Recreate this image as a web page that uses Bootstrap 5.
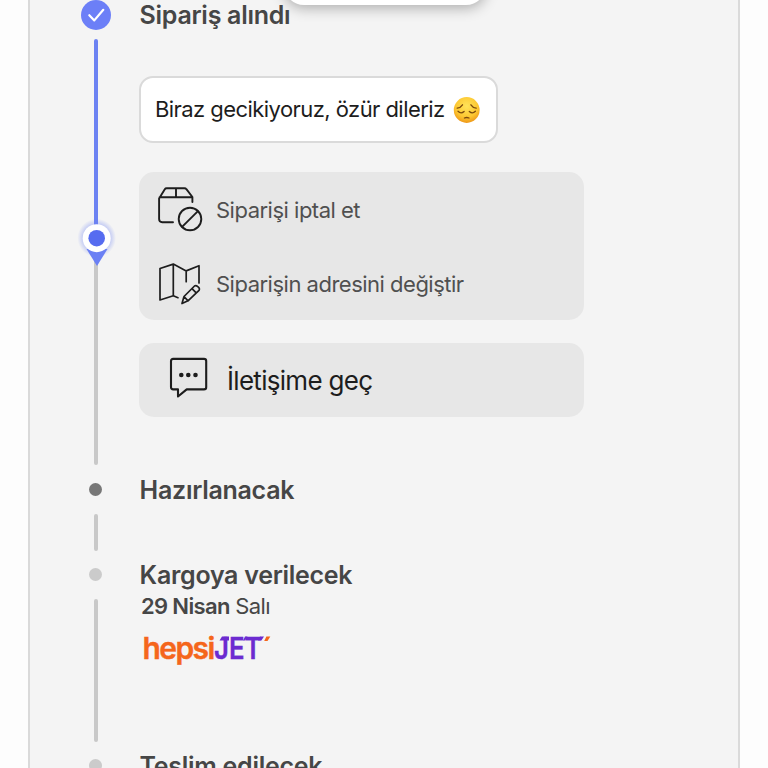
<!DOCTYPE html>
<html lang="tr">
<head>
    <meta charset="UTF-8">
    <meta name="viewport" content="width=device-width, initial-scale=1.0">
    <title>Sipariş Takibi</title>
    <link href="https://cdn.jsdelivr.net/npm/bootstrap@5.3.0/dist/css/bootstrap.min.css" rel="stylesheet">
    <style>
        body {
            height: 768px;
            overflow: hidden;
            background: #fdfdfd;
            font-family: Inter, "Liberation Sans", sans-serif;
            color: #464646;
        }
        .order-panel {
            width: 712px;
            height: 768px;
            margin-left: 28px;
            padding-left: 51px;
            background: #f4f4f4;
            border: solid #dadada;
            border-width: 0 2px;
            overflow: hidden;
        }
        .floating-bar {
            left: 284px;
            top: -40px;
            width: 202px;
            height: 45px;
            background: #fff;
            border-radius: 20px;
            box-shadow: 0 3px 14px rgba(0, 0, 0, .3);
        }
        .step {
            gap: 28px;
        }
        .step-received { height: 474px; }
        .step-prepare { height: 85px; }
        .step-cargo { height: 191px; }
        .rail {
            width: 30px;
            flex: none;
        }
        .rail-line {
            width: 4px;
            border-radius: 2px;
            background: #c8c8c8;
        }
        .rail-line.done {
            background: #6c82f2;
            height: 199px;
            margin-top: 9px;
            border-radius: 2px 2px 0 0;
        }
        .rail-line.waiting {
            height: 227px;
            border-radius: 0 0 2px 2px;
        }
        .rail-pin {
            left: -5px;
            top: 218px;
        }
        .rail-dot {
            width: 13px;
            height: 13px;
            margin: 9px 1px 18px 0;
            border-radius: 50%;
            background: #cbcbcb;
        }
        .rail-dot.next { background: #777; }
        .step-title {
            height: 30px;
            margin: 0;
            padding-left: .6px;
            font-size: 25px;
            line-height: 30px;
            font-weight: 600;
            letter-spacing: -.28px;
            white-space: nowrap;
        }
        .step-title.upcoming { padding-top: 1px; }
        .delay-note {
            width: 359px;
            height: 67px;
            margin-top: 46px;
            padding-left: 14px;
            background: #fff;
            border: 2px solid #dadada;
            border-radius: 14px;
            color: #1d1d1d;
            font-size: 22px;
            letter-spacing: -.56px;
            white-space: nowrap;
        }
        .action-box {
            width: 445px;
            background: #e7e7e7;
            border-radius: 15px;
        }
        .action-list {
            height: 148px;
            margin-top: 29px;
        }
        .action-row {
            height: 74px;
            padding-left: 17px;
            color: #505050;
            font-size: 22px;
            letter-spacing: -.5px;
        }
        .action-row span { padding-top: 2px; }
        .action-row svg { margin-right: 12px; }
        .contact-box {
            height: 74px;
            margin-top: 23px;
            padding-left: 29px;
            color: #1d1d1d;
            font-size: 26px;
            letter-spacing: -.7px;
        }
        .contact-box svg {
            margin: -4px 17px 0 0;
        }
        .cargo-date {
            height: 30px;
            padding: 2px 0 0 2px;
            font-size: 22px;
            line-height: 30px;
            letter-spacing: -.65px;
        }
        .line-icon {
            fill: none;
            stroke: #1d1d1d;
            stroke-linecap: round;
            stroke-linejoin: round;
            flex: none;
        }
    </style>
</head>
<body>
    <main class="order-panel">
        <!-- Sipariş alındı -->
        <section class="step step-received d-flex">
            <div class="rail position-relative d-flex flex-column align-items-center">
                <svg width="30" height="30" viewBox="0 0 30 30">
                    <circle cx="15" cy="15" r="15" fill="#6c7ff7"/>
                    <path d="M8.3 15.2 13.3 20.4 22.3 9.8" fill="none" stroke="#fff" stroke-width="2.2" stroke-linecap="round" stroke-linejoin="round"/>
                </svg>
                <div class="rail-line done"></div>
                <div class="rail-line waiting"></div>
                <svg class="rail-pin position-absolute" width="40" height="52" viewBox="0 0 40 52">
                    <defs>
                        <radialGradient id="pinGlow">
                            <stop offset=".65" stop-color="#6c82f2" stop-opacity=".42"/>
                            <stop offset="1" stop-color="#6c82f2" stop-opacity="0"/>
                        </radialGradient>
                    </defs>
                    <circle cx="20.7" cy="20" r="19.3" fill="url(#pinGlow)"/>
                    <path d="M10.5 31H31.5L21 48Z" fill="#6b80f4"/>
                    <circle cx="20.7" cy="20.2" r="14" fill="#fff"/>
                    <circle cx="20.7" cy="20.2" r="8.3" fill="#566cf0"/>
                </svg>
            </div>
            <div>
                <h2 class="step-title">Sipariş alındı</h2>
                <div class="delay-note d-flex align-items-center">
                    <span>Biraz gecikiyoruz, özür dileriz</span>
                    <svg class="ms-2" width="27" height="26" viewBox="-.7 0 27 26">
                        <defs>
                            <radialGradient id="faceFill" cx=".5" cy=".35" r=".65">
                                <stop offset="0" stop-color="#ffe35a"/>
                                <stop offset=".65" stop-color="#fdc832"/>
                                <stop offset="1" stop-color="#ee9718"/>
                            </radialGradient>
                        </defs>
                        <circle cx="13" cy="13" r="12.9" fill="url(#faceFill)"/>
                        <g fill="none" stroke="#7c4a0c" stroke-width="1.3" stroke-linecap="round">
                            <path d="M3.5 11.2Q7 10.6 8.8 7.8M22.5 11.2Q19 10.6 17.2 7.8"/>
                            <path d="M4.3 14.3Q7.2 17.3 10.4 14.5M15.6 14.5Q18.8 17.3 21.7 14.3"/>
                            <path d="M10.7 21Q13 20 15.3 21"/>
                        </g>
                    </svg>
                </div>
                <div class="action-box action-list">
                    <div class="action-row d-flex align-items-center">
                        <svg class="line-icon" width="48" height="48" viewBox="0 0 48 48" stroke-width="1.9">
                            <path d="M17 37.2H6.2Q3.1 37.2 3.1 34V13.6L8.8 4.2Q9.4 3.2 10.6 3.2H28.5Q29.7 3.2 30.4 4.2L36.4 12V17M3.6 12.2H36M20 3.4V12"/>
                            <circle cx="34" cy="34" r="11.3"/>
                            <path d="M26.3 41.7 41.7 26.3"/>
                        </svg>
                        <span>Siparişi iptal et</span>
                    </div>
                    <div class="action-row d-flex align-items-center">
                        <svg class="line-icon" width="48" height="48" viewBox="0 0 48 48" stroke-width="1.7">
                            <path d="M22 38.7 17.3 36.8 4 41V9.5L17.3 5.1 30.2 11.9 43 6.7V24M17.3 5.1V36.8M30.2 11.9V22.7"/>
                            <path d="M26 44.5 28 37.5 38.5 27Q40 26 41.5 27.4L42.9 28.6Q44 30 43 31.4L32 41.8ZM28 37.5 32 41.8M36 29.6 40.2 33.9"/>
                        </svg>
                        <span>Siparişin adresini değiştir</span>
                    </div>
                </div>
                <div class="action-box contact-box d-flex align-items-center">
                    <svg class="line-icon" width="42" height="42" viewBox="0 0 42 42" stroke-width="2.1">
                        <path d="M5.2 1.9H36Q38.2 1.9 38.2 4.1V30.2Q38.2 32.4 36 32.4H18.7L10 39.5V32.4H5.2Q3 32.4 3 30.2V4.1Q3 1.9 5.2 1.9Z"/>
                        <g fill="#1d1d1d" stroke="none">
                            <circle cx="13.3" cy="18" r="2.3"/>
                            <circle cx="20.3" cy="18" r="2.3"/>
                            <circle cx="27.5" cy="18" r="2.3"/>
                        </g>
                    </svg>
                    <span>İletişime geç</span>
                </div>
            </div>
        </section>

        <!-- Hazırlanacak -->
        <section class="step step-prepare d-flex">
            <div class="rail d-flex flex-column align-items-center">
                <div class="rail-dot next"></div>
                <div class="rail-line" style="height: 37px"></div>
            </div>
            <h2 class="step-title upcoming">Hazırlanacak</h2>
        </section>

        <!-- Kargoya verilecek -->
        <section class="step step-cargo d-flex">
            <div class="rail d-flex flex-column align-items-center">
                <div class="rail-dot"></div>
                <div class="rail-line" style="height: 143px"></div>
            </div>
            <div>
                <h2 class="step-title upcoming">Kargoya verilecek</h2>
                <div class="cargo-date"><span class="fw-semibold">29 Nisan</span> Salı</div>
                <svg class="d-block" width="136" height="50" viewBox="0 0 136 50" font-family="Inter, sans-serif" font-weight="600">
                    <text x="3.5" y="40" font-size="30" letter-spacing="-1.6" fill="#f5661b" stroke="#f5661b" stroke-width=".4">hepsi</text>
                    <text x="75" y="40" font-size="30.5" fill="#6c2bd0" stroke="#6c2bd0" stroke-width=".4" textLength="47.5" lengthAdjust="spacingAndGlyphs">JET</text>
                    <!-- slanted bar ends -->
                    <path d="M83 17.6H90V21.6H80.5ZM106 17.6H108.5L106 21.6H104ZM121 17.6H125L122.4 21.6H119Z" fill="#6c2bd0"/>
                    <path d="M127.4 17.5H131.3L128.5 22H125.2Z" fill="#f5661b"/>
                </svg>
            </div>
        </section>

        <!-- Teslim edilecek -->
        <section class="step d-flex">
            <div class="rail d-flex flex-column align-items-center">
                <div class="rail-dot"></div>
            </div>
            <h2 class="step-title upcoming">Teslim edilecek</h2>
        </section>
    </main>
    <div class="floating-bar position-absolute"></div>
    <script src="https://cdn.jsdelivr.net/npm/bootstrap@5.3.0/dist/js/bootstrap.bundle.min.js"></script>
</body>
</html>
